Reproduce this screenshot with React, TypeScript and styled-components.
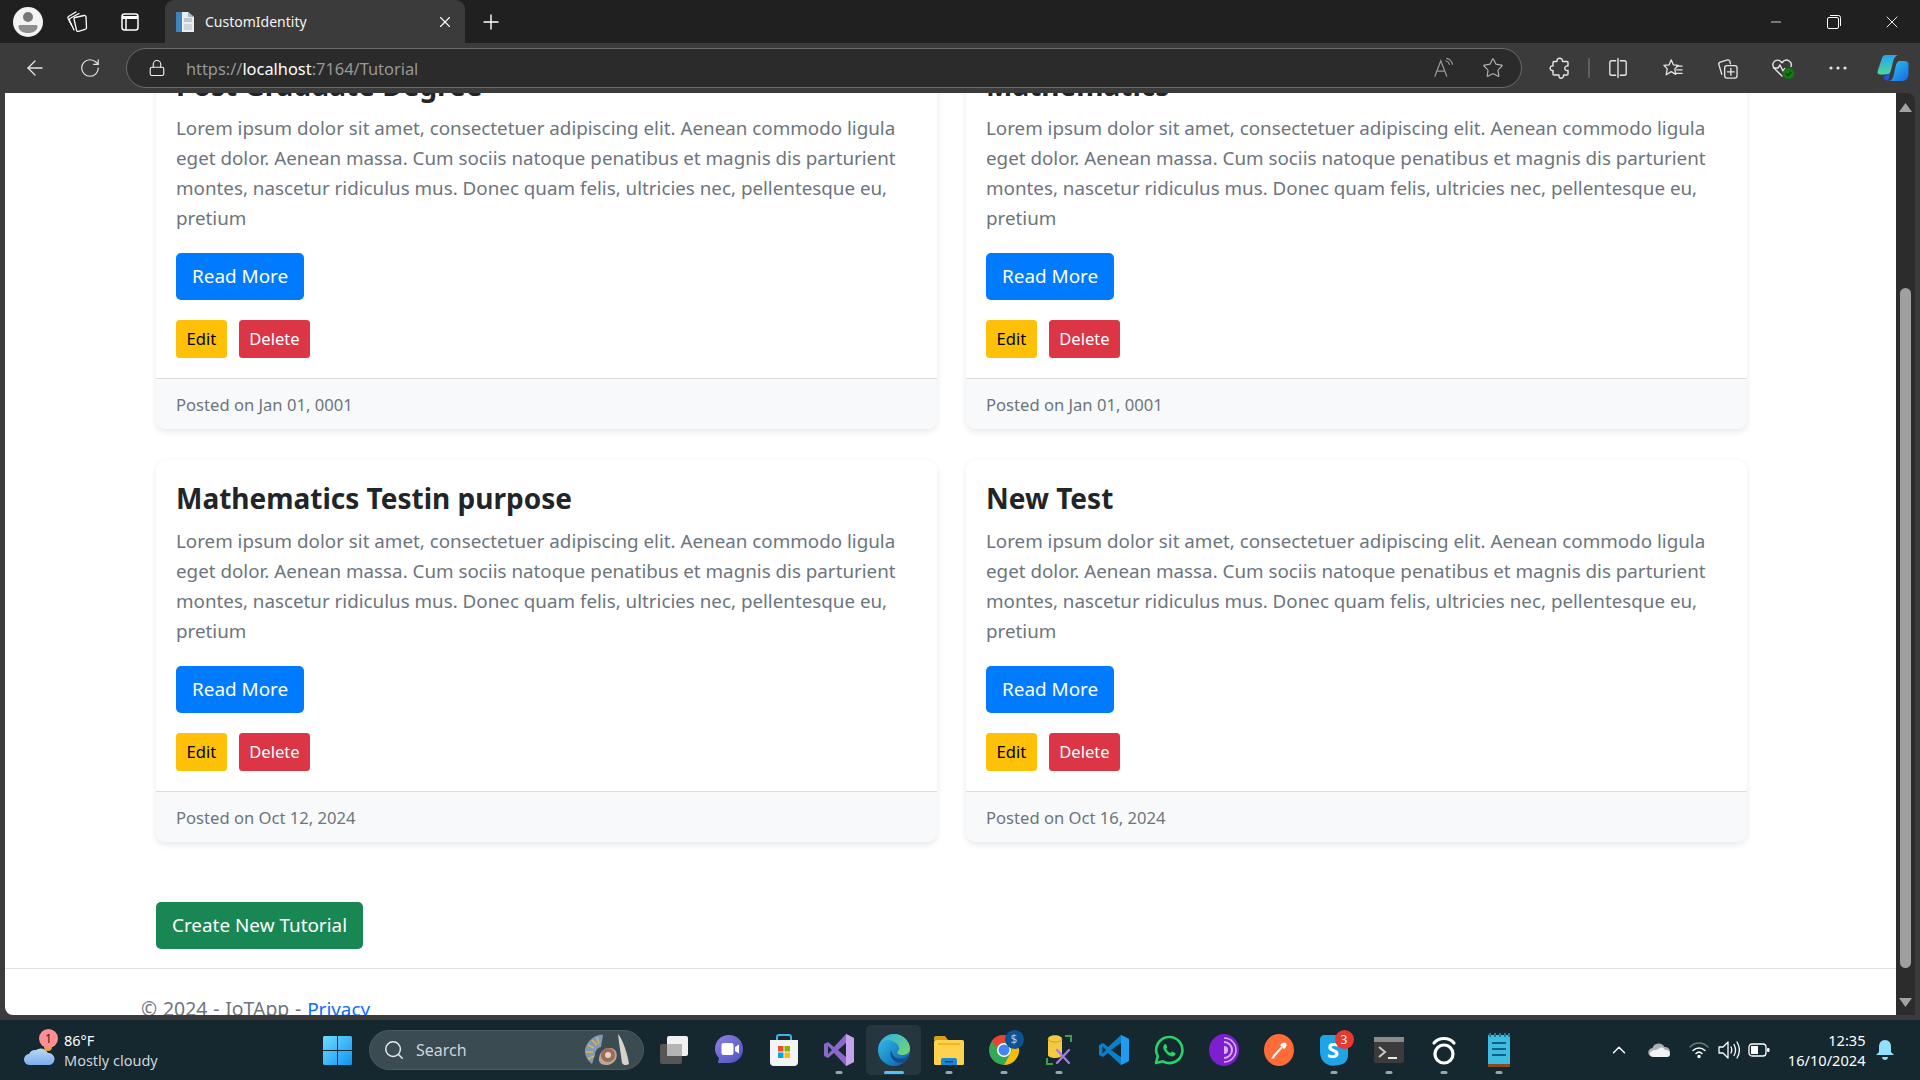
import React from 'react';
import styled, { createGlobalStyle } from 'styled-components';
import {
  ArrowLeft,
  ChevronUp,
  Lock,
  Minus,
  Plus,
  RotateCw,
  Search,
  Star,
  X,
} from 'lucide-react';

const GlobalStyle = createGlobalStyle`
  html, body { margin: 0; padding: 0; background: #202020; }
  * { box-sizing: border-box; }
  body { font-family: "Noto Sans", "Open Sans", Arial, sans-serif; }
`;

const Screen = styled.div`
  width: 1920px;
  height: 1080px;
  display: flex;
  flex-direction: column;
  overflow: hidden;
  background: #3b3b3b;
`;

/* browser chrome */
const TabStrip = styled.div`
  height: 43px;
  flex: none;
  display: flex;
  align-items: center;
  background: #202020;
  color: #fff;
  padding-left: 13px;
`;

const Avatar = styled.div`
  width: 30px;
  height: 30px;
  border-radius: 50%;
  background: #f3f3f3;
  margin-right: 18px;
  display: flex;
  align-items: center;
  justify-content: center;
`;

const StripIcon = styled.div`
  width: 32px;
  height: 32px;
  display: flex;
  align-items: center;
  justify-content: center;
  margin-right: 20.5px;
`;

const Tab = styled.div`
  width: 300px;
  height: 43px;
  margin-left: -1px;
  background: #3b3b3b;
  border-radius: 9px 9px 0 0;
  display: flex;
  align-items: center;
  padding: 0 11px 0 10px;
`;

const TabTitle = styled.span`
  flex: 1;
  margin-left: 10px;
  font-size: 14px;
  color: #f2f2f2;
`;

const NewTab = styled.div`
  margin-left: 14px;
  display: flex;
  align-items: center;
`;

const WindowButtons = styled.div`
  margin-left: auto;
  display: flex;
  align-items: center;
  padding-right: 18px;
  gap: 38px;
`;

const WindowButton = styled.div`
  width: 20px;
  display: flex;
  justify-content: center;
`;

const Toolbar = styled.div`
  height: 50px;
  flex: none;
  display: flex;
  align-items: center;
  background: #3b3b3b;
  color: #e6e6e6;
  padding-left: 17px;
`;

const NavButton = styled.div`
  width: 36px;
  height: 36px;
  margin-right: 19px;
  display: flex;
  align-items: center;
  justify-content: center;
`;

const AddressBar = styled.div`
  width: 1398px;
  height: 40px;
  margin-left: -1px;
  border: 1px solid #6a6a6a;
  border-radius: 20px;
  background: #2b2b2b;
  display: flex;
  align-items: center;
  padding: 0 4px 0 21px;
  margin-right: 15px;
`;

const Url = styled.div`
  flex: 1;
  margin-left: 20px;
  font-size: 16.4px;
  color: #989898;
`;

const UrlHost = styled.span`
  color: #fff;
`;

const BarIcon = styled.div`
  width: 49px;
  display: flex;
  justify-content: center;
  align-items: center;
`;

const ToolIcon = styled.div<{ $w?: number }>`
  width: ${({ $w }) => $w ?? 55}px;
  height: 34px;
  flex: none;
  display: flex;
  align-items: center;
  justify-content: center;
`;

const ToolDivider = styled.div`
  width: 2px;
  height: 20px;
  background: #5f5f5f;
  margin-left: 6px;
`;

/* page */
const Viewport = styled.div`
  flex: 1;
  min-height: 0;
  display: flex;
  padding-left: 5px;
  background: #3b3b3b;
`;

const Page = styled.div`
  width: 1891px;
  height: 922px;
  background: #fff;
  border-bottom-left-radius: 8px;
  overflow: hidden;
`;

const Cards = styled.div`
  display: grid;
  grid-template-columns: 781px 781px;
  column-gap: 29px;
  row-gap: 31px;
  margin: -46px 0 0 151px;
`;

const Card = styled.article`
  background: #fff;
  border-radius: 10px;
  box-shadow: 0 2.5px 6px rgba(0, 0, 0, 0.09);
  overflow: hidden;
  display: flex;
  flex-direction: column;
`;

const CardBody = styled.div`
  padding: 20px;
`;

const CardTitle = styled.h4`
  margin: 0 0 10px;
  font-size: 28px;
  line-height: 36px;
  font-weight: 700;
  color: #212529;
`;

const CardText = styled.p`
  margin: 0 0 20px;
  font-size: 18.8px;
  line-height: 30px;
  color: #6c757d;
`;

const Btn = styled.button<{ $bg: string; $fg?: string; $small?: boolean }>`
  display: block;
  height: ${({ $small }) => ($small ? 38 : 47)}px;
  padding: 0 ${({ $small }) => ($small ? 10.5 : 16)}px;
  border: none;
  border-radius: ${({ $small }) => ($small ? 3.5 : 5)}px;
  background: ${({ $bg }) => $bg};
  color: ${({ $fg }) => $fg ?? '#fff'};
  font-family: inherit;
  font-size: ${({ $small }) => ($small ? 16.6 : 18.9)}px;
  line-height: 1;
`;

const ReadMore = styled(Btn)`
  margin-bottom: 20px;
`;

const CardActions = styled.div`
  display: flex;
  gap: 12px;
`;

const CardFooter = styled.div`
  height: 51px;
  padding: 0 20px;
  display: flex;
  align-items: center;
  border-top: 1px solid #dcdcdc;
  background: #f8f9fa;
  color: #6c757d;
  font-size: 16.6px;
`;

const CreateRow = styled.div`
  margin: 60px 0 19px 151px;
`;

const PageFooter = styled.footer`
  border-top: 1px solid #dee2e6;
  padding: 25px 0 0 136px;
  font-size: 19.4px;
  line-height: 30px;
  word-spacing: 0.8px;
  color: #6c757d;
`;

const FooterLink = styled.a`
  color: #0d6efd;
  font-size: 18.9px;
  text-decoration: underline;
`;

const ScrollTrack = styled.div`
  width: 19px;
  height: 922px;
  background: #2c2c2c;
  border-radius: 0 8px 0 0;
  display: flex;
  flex-direction: column;
  align-items: center;
  padding-top: 10px;
`;

const ScrollThumb = styled.div`
  width: 11px;
  height: 680px;
  margin-top: 176px;
  background: #9f9f9f;
  border-radius: 6px;
`;

const ScrollArrow = styled.svg<{ $down?: boolean }>`
  flex: none;
  margin-top: ${({ $down }) => ($down ? 30 : 0)}px;
  transform: ${({ $down }) => ($down ? 'rotate(180deg)' : 'none')};
`;

const FrameEdge = styled.div`
  height: 5px;
  flex: none;
  background: #3b3b3b;
`;

/* taskbar */
const Taskbar = styled.div`
  height: 60px;
  flex: none;
  display: flex;
  align-items: center;
  background: #15272f;
  color: #fff;
`;

const Weather = styled.div`
  width: 310px;
  padding-left: 24px;
  display: flex;
  align-items: center;
  gap: 8px;
`;

const WeatherIcon = styled.div`
  position: relative;
  width: 32px;
  height: 34px;
  padding-top: 9px;
`;

const WeatherBadge = styled.span`
  position: absolute;
  left: 15px;
  top: -4px;
  width: 19px;
  height: 19px;
  border-radius: 50%;
  background: #ff8f93;
  color: #222;
  font-size: 12px;
  line-height: 19px;
  text-align: center;
`;

const WeatherText = styled.div`
  font-size: 14.5px;
  line-height: 20px;
  margin-top: -1px;
`;

const WeatherSub = styled.div`
  color: #d0d5d8;
`;

const StartCell = styled.div`
  width: 55px;
  display: flex;
  justify-content: center;
`;

const SearchPill = styled.div`
  width: 275px;
  height: 40px;
  margin: 0 2px 0 4px;
  border-radius: 20px;
  background: #3a4b52;
  border: 1px solid #4a5a60;
  display: flex;
  align-items: center;
  padding: 0 10px 0 13px;
`;

const SearchLabel = styled.span`
  flex: 1;
  margin-left: 11px;
  color: #cfd5d8;
  font-size: 16px;
`;

const TaskCell = styled.div<{ $active?: boolean }>`
  position: relative;
  width: 55px;
  height: 50px;
  flex: none;
  display: flex;
  align-items: center;
  justify-content: center;
  border-radius: 5px;
  background: ${({ $active }) => ($active ? '#26363f' : 'transparent')};
`;

const RunDot = styled.span<{ $active?: boolean }>`
  position: absolute;
  bottom: 1px;
  left: 50%;
  transform: translateX(-50%);
  width: ${({ $active }) => ($active ? 20 : 7)}px;
  height: 3.5px;
  border-radius: 2px;
  background: ${({ $active }) => ($active ? '#4cc2ff' : '#9aa5aa')};
`;

const CountBadge = styled.span<{ $bg: string; $fg?: string }>`
  position: absolute;
  right: 7.5px;
  top: 4.5px;
  width: 19px;
  height: 19px;
  border-radius: 50%;
  background: ${({ $bg }) => $bg};
  color: ${({ $fg }) => $fg ?? '#fff'};
  font-size: 12px;
  line-height: 19px;
  text-align: center;
`;

const Tray = styled.div`
  margin-left: auto;
  display: flex;
  align-items: center;
  padding-right: 23px;
`;

const TrayIcon = styled.div<{ $w: number }>`
  width: ${({ $w }) => $w}px;
  display: flex;
  justify-content: center;
`;

const Clock = styled.div`
  width: 92px;
  margin-right: 7.5px;
  text-align: right;
  font-size: 14.6px;
  line-height: 20px;
`;

const CollectionsIcon = () => (
  <svg width="22" height="24" viewBox="0 0 22 24" fill="none" stroke="currentColor" strokeWidth="1.300" strokeLinecap="round" strokeLinejoin="round">
    <path d="M9 7.500 18 5.500c1-.2 1.800.4 2 1.400l.5 10.500c0 1-.5 1.800-1.500 2l-6.500 2c-1 .2-1.800-.3-2-1.300L8 9c-.2-.8.200-1.300 1-1.500z" />
    <path d="M8 20 3.500 10.500c-.4-1 0-1.800.8-2.300L13 3.500" />
    <path d="M5.500 15 2 8.500C1.600 7.500 2 6.700 2.800 6.200L10 2" />
  </svg>
);

const VerticalTabsIcon = () => (
  <svg width="20" height="20" viewBox="0 0 20 20" fill="none" stroke="currentColor" strokeWidth="1.500">
    <rect x="2" y="2" width="16" height="16" rx="2.500" />
    <path d="M2 5.500h16" strokeWidth="3" />
    <path d="M6 5v13" />
  </svg>
);

const FaviconIcon = () => (
  <svg width="20" height="22" viewBox="0 0 20 22">
    <path d="M1 1h12l6 5v15H1z" fill="#e9eef2" />
    <rect x="1" y="1" width="6" height="20" fill="#3f83bd" />
    <rect x="9" y="7" width="8" height="4" fill="#bfc8cf" />
    <rect x="9" y="13" width="8" height="6" fill="#cdd5db" />
    <path d="M13 1l6 5h-6z" fill="#aab4bc" />
  </svg>
);

const ReadAloudIcon = () => (
  <svg width="22" height="20" viewBox="0 0 24 22" fill="none" stroke="#9a9a9a" strokeWidth="1.300" strokeLinecap="round">
    <path d="M2 20 8.500 3 15 20M4.500 14.500h8" />
    <path d="M14 3c2 .5 3.500 2 4 4M15 .5c3 .7 5.500 3 6.500 6.500" />
  </svg>
);

const PuzzleIcon = () => (
  <svg width="22" height="24" viewBox="0 0 22 24" fill="none" stroke="currentColor" strokeWidth="1.400" strokeLinejoin="round">
    <path d="M8 5.500C7 1.500 14 1 13.500 5.500H18c.6 0 1 .4 1 1v3.500c-4-1-4.500 5.500 0 4.500V18c0 .6-.4 1-1 1h-3.500c1 4-5.500 4.500-4.500 0H5c-.6 0-1-.4-1-1v-3.500c-4 1-3.500-5.500 0-4.500V6.500c0-.6.4-1 1-1z" />
  </svg>
);

const SplitIcon = () => (
  <svg width="20" height="24" viewBox="0 0 22 24" fill="none" stroke="currentColor" strokeWidth="1.500">
    <path d="M9 4H4a2 2 0 0 0-2 2v12a2 2 0 0 0 2 2h5M13 4h5a2 2 0 0 1 2 2v12a2 2 0 0 1-2 2h-5M11 1v22" />
  </svg>
);

const FavoritesIcon = () => (
  <svg width="22" height="20" viewBox="0 0 24 22" fill="none" stroke="currentColor" strokeWidth="1.400" strokeLinejoin="round" strokeLinecap="round">
    <path d="M10 2l2.400 5.500 5.600.5-4 4 1 6-5-3-5.500 3.500 1.200-6.500L2 8l5.800-.5z" />
    <path d="M16 9h6M16 13h6M15 17h7" />
  </svg>
);

const AddCollectionIcon = () => (
  <svg width="21" height="21" viewBox="0 0 22 22" fill="none" stroke="currentColor" strokeWidth="1.400" strokeLinecap="round">
    <path d="M5 17 2 7c-.4-1.300.2-2.200 1.400-2.600L11 2c1.300-.3 2 .2 2.500 1.500L14 6" />
    <rect x="8" y="8" width="13" height="13" rx="2.500" />
    <path d="M14.500 11v7M11 14.500h7" />
  </svg>
);

const HealthIcon = () => (
  <svg width="24" height="24" viewBox="0 0 24 24">
    <path
      d="M11 20 3.500 12.500C1 10 1.500 6.500 3.800 5c2.400-1.500 5.200-.8 7.200 1.800C13 4.200 15.800 3.500 18.200 5c1.800 1.200 2.600 3.400 1.800 5.500M2.500 12H7l2-3 3 6 1.500-2.500"
      fill="none"
      stroke="#e6e6e6"
      strokeWidth="1.400"
      strokeLinecap="round"
      strokeLinejoin="round"
    />
    <circle cx="17.500" cy="17.500" r="5.500" fill="#107c10" />
    <path d="M15 17.500l2 2 3.200-3.500" fill="none" stroke="#0b3d0b" strokeWidth="1.500" />
  </svg>
);

const CopilotIcon = () => (
  <svg width="32" height="28" viewBox="0 0 32 28">
    <defs>
      <linearGradient id="copilotA" x1="0" y1="0" x2="0" y2="1">
        <stop offset="0" stopColor="#27a4f0" />
        <stop offset="1" stopColor="#4bd89a" />
      </linearGradient>
      <linearGradient id="copilotB" x1="0" y1="0" x2="1" y2="1">
        <stop offset="0" stopColor="#30c9f5" />
        <stop offset="1" stopColor="#1668e0" />
      </linearGradient>
    </defs>
    <path d="M9 1h12c-3 1-4 3-5 7l-2 8c-.7 3-2 4.500-5 4.500H3c-2 0-3-1.500-2.300-3.500L5 4c.7-2 2-3 4-3z" fill="url(#copilotA)" />
    <path d="M23 7h5c2 0 3.500 1.500 3.500 3.500V20c0 4-2.500 7-6.500 7H11c3 0 4.500-1.500 5.500-5l2-9c.7-3.500 2-6 4.500-6z" fill="url(#copilotB)" />
    <path d="M8 20h5l-1 4c-.5 2-2 3-3 3h2l-4-2z" fill="#2a4fd8" />
  </svg>
);

const CloudIcon = () => (
  <svg width="32" height="24" viewBox="0 0 32 24">
    <defs>
      <linearGradient id="weatherCloud" x1="0" y1="0" x2="0" y2="1">
        <stop offset="0" stopColor="#bcd8f8" />
        <stop offset="1" stopColor="#7aaeea" />
      </linearGradient>
    </defs>
    <circle cx="24" cy="5" r="4" fill="#f09a36" />
    <path d="M6 23a5.500 5.500 0 0 1-1-11 7 7 0 0 1 7-4 8 8 0 0 1 12 3 6 6 0 0 1 1 12z" fill="url(#weatherCloud)" />
  </svg>
);

const WindowsLogo = () => (
  <svg width="29" height="29" viewBox="0 0 29 29">
    <defs>
      <linearGradient id="winLogo" x1="0" y1="0" x2="1" y2="1">
        <stop offset="0" stopColor="#6fdcff" />
        <stop offset="1" stopColor="#0e94f0" />
      </linearGradient>
    </defs>
    <path d="M0 1.500A1.500 1.500 0 0 1 1.500 0H14v14H0zM15 0h12.500A1.500 1.500 0 0 1 29 1.500V14H15zM0 15h14v14H1.500A1.500 1.500 0 0 1 0 27.500zM15 15h14v12.500a1.500 1.500 0 0 1-1.500 1.500H15z" fill="url(#winLogo)" />
  </svg>
);

const ShellsArt = () => (
  <svg width="50" height="34" viewBox="0 0 50 34">
    <path d="M2 16C5 6 14 1 20 2l-2 12c-4 1-6 4-6 8l-3 9c-4-3-8-9-7-15z" fill="#7f9bb4" />
    <path d="M5 12l6 3M9 7l5 5M14 4l2 7M3 19l7 0M5 26l6-3" stroke="#e0b44c" strokeWidth="1.500" />
    <path d="M16 28c-1-8 5-14 12-13 5 1 7 6 5 11-2 4-6 6-10 6-3 0-6-1-7-4z" fill="#b6a79a" />
    <circle cx="25" cy="22" r="7" fill="#9c6d55" />
    <circle cx="25" cy="22" r="3" fill="#e4d5c6" />
    <path d="M35 1c4 4 10 20 11 30-3 2-6 1-7-1-1-8-3-20-4-29z" fill="#d6d3cb" />
  </svg>
);

const TaskViewIcon = () => (
  <svg width="30" height="30" viewBox="0 0 30 30">
    <rect x="1" y="9" width="22" height="20" rx="2" fill="#565656" />
    <rect x="8" y="1" width="21" height="20" rx="2" fill="#f1f1f1" />
    <rect x="8" y="9" width="15" height="12" fill="#b5b5b5" />
  </svg>
);

const MeetIcon = () => (
  <svg width="28" height="30" viewBox="0 0 28 30">
    <defs>
      <linearGradient id="meet" x1="0" y1="0" x2="1" y2="1">
        <stop offset="0" stopColor="#8f7fe8" />
        <stop offset="1" stopColor="#4b53bc" />
      </linearGradient>
    </defs>
    <path d="M14 0c8 0 14 6 14 14s-6 14-14 14H3l1-5C1.500 20.500 0 17.500 0 14 0 6 6 0 14 0z" fill="url(#meet)" />
    <rect x="6.500" y="8" width="12" height="12" rx="2" fill="#fff" />
    <path d="M20 12l4-2.500v9L20 16z" fill="#fff" />
  </svg>
);

const StoreIcon = () => (
  <svg width="30" height="32" viewBox="0 0 30 32">
    <path d="M8 6V3a2 2 0 0 1 2-2h10a2 2 0 0 1 2 2v3" fill="none" stroke="#37b7e8" strokeWidth="2" />
    <path d="M1 6h28v22a4 4 0 0 1-4 4H5a4 4 0 0 1-4-4z" fill="#f4f4f4" />
    <rect x="9" y="12" width="5.500" height="5.500" fill="#f25022" />
    <rect x="15.500" y="12" width="5.500" height="5.500" fill="#7fba00" />
    <rect x="9" y="18.500" width="5.500" height="5.500" fill="#00a4ef" />
    <rect x="15.500" y="18.500" width="5.500" height="5.500" fill="#ffb900" />
  </svg>
);

const VisualStudioIcon = () => (
  <svg width="30" height="32" viewBox="0 0 30 32">
    <path d="M22 0l8 4v24l-8 4-12-13-6 5-4-2V10l4-2 6 5z" fill="#8a68c9" />
    <path d="M22 0l8 4v24l-8 4z" fill="#c6a2ea" />
    <path d="M22 9 14 16l8 7z" fill="#15272f" />
    <path d="M4 12v8l4-4z" fill="#15272f" />
  </svg>
);

const EdgeIcon = () => (
  <svg width="32" height="32" viewBox="0 0 32 32">
    <defs>
      <linearGradient id="edgeA" x1="0" y1="0" x2="1" y2="1">
        <stop offset="0" stopColor="#35c1f1" />
        <stop offset="1" stopColor="#0c59a4" />
      </linearGradient>
      <linearGradient id="edgeB" x1="0" y1="0" x2="1" y2="1">
        <stop offset="0" stopColor="#2fb0e8" />
        <stop offset="1" stopColor="#7cd66a" />
      </linearGradient>
    </defs>
    <circle cx="16" cy="16" r="16" fill="url(#edgeA)" />
    <path d="M3 9C6 3 11 0 16 0c9 0 16 7 16 15 0 4-4 6-8 6-3 0-5-1-5-3 3-1 3-6-1-9C13 5 7 5 3 9z" fill="url(#edgeB)" />
    <path d="M13 16c-2 6 2 12 8 13 5 .500 8-3 9-7-3 3-8 3-11 2-4-1-5-5-6-8z" fill="#0f4f94" />
  </svg>
);

const ExplorerIcon = () => (
  <svg width="32" height="30" viewBox="0 0 32 30">
    <path d="M1 3a2 2 0 0 1 2-2h9l3 4h-14z" fill="#d79f16" />
    <rect x="1" y="5" width="30" height="25" rx="1.500" fill="#fcd24f" />
    <rect x="5" y="8" width="22" height="2" fill="#f5b81a" />
    <path d="M10 23h12a2 2 0 0 1 2 2v5H8v-5a2 2 0 0 1 2-2z" fill="#1c88d4" />
    <rect x="12" y="26" width="8" height="1.500" fill="#0d4f82" />
  </svg>
);

const ChromeIcon = () => (
  <svg width="32" height="32" viewBox="0 0 32 32">
    <circle cx="16" cy="16" r="15" fill="#34a853" />
    <path d="M16 1a15 15 0 0 1 13 7.500H16a7.500 7.500 0 0 0-7 5L3.500 7A15 15 0 0 1 16 1z" fill="#ea4335" />
    <path d="M29 8.500A15 15 0 0 1 16 31l6.500-11.500A7.500 7.500 0 0 0 22 11z" fill="#fbbc04" />
    <circle cx="16" cy="16" r="7" fill="#fff" />
    <circle cx="16" cy="16" r="5.500" fill="#4285f4" />
  </svg>
);

const SqlToolsIcon = () => (
  <svg width="28" height="32" viewBox="0 0 28 32" fill="none">
    <path d="M3 5c0-5 14-5 14 0v16c0 4-14 4-14 0z" fill="#f6c945" />
    <path d="M3 5c0 4 14 4 14 0" stroke="#d49a1d" strokeWidth="1" />
    <path d="M20 2h6v6M2 24v6h6" stroke="#3f9f49" strokeWidth="2" />
    <path d="M12 29l12-13M12 16l12 13" stroke="#a77be0" strokeWidth="2.300" strokeLinecap="round" />
  </svg>
);

const VsCodeIcon = () => (
  <svg width="30" height="30" viewBox="0 0 30 30">
    <path d="M22 0l8 4v22l-8 4-13-12-5 4-4-2V10l4-2 5 4z" fill="#0a7fcb" />
    <path d="M22 0l8 4v22l-8 4z" fill="#1f9cf0" />
    <path d="M22 8 12 15l10 7z" fill="#15272f" />
    <path d="M3.500 11.500v7L7 15z" fill="#15272f" />
  </svg>
);

const WhatsAppIcon = () => (
  <svg width="30" height="30" viewBox="0 0 30 30">
    <path d="M15.500 2a13 13 0 1 1-6.500 24.300L2 28l1.800-6.800A13 13 0 0 1 15.500 2z" fill="none" stroke="#25d366" strokeWidth="2.600" strokeLinejoin="round" />
    <path d="M11 9c-1 .5-2 2-1.700 4 .5 3 4 7 8 8.300 2 .5 3.500-.5 4.200-2 .2-.7 0-1.200-.5-1.400l-2.500-1.200c-.5-.2-.9 0-1.200.4l-.8 1c-1.800-.7-3.500-2.300-4.400-4.300l.8-.9c.3-.4.400-.8.200-1.200L12.200 9.500C12 9 11.500 8.800 11 9z" fill="#25d366" />
  </svg>
);

const TorIcon = () => (
  <svg width="30" height="32" viewBox="0 0 30 32" fill="none">
    <ellipse cx="15" cy="16" rx="15" ry="16" fill="#7d1fd0" />
    <path d="M15 8a8 8 0 0 1 0 16" stroke="#d6b4f2" strokeWidth="2" />
    <path d="M15 4a12 12 0 0 1 0 24" stroke="#d6b4f2" strokeWidth="1.500" />
    <path d="M15 12a4 4 0 0 1 0 8z" fill="#d6b4f2" />
  </svg>
);

const PostmanIcon = () => (
  <svg width="30" height="32" viewBox="0 0 30 32" fill="none">
    <ellipse cx="15" cy="16" rx="15" ry="16" fill="#ff6c37" />
    <path d="M9 23l9-10" stroke="#fff" strokeWidth="2" />
    <path d="M16 11c2-3 5-3 6-2s1 4-2 6z" fill="#fff" />
    <path d="M7 25l2-3 2 2z" fill="#fff" />
  </svg>
);

const SkypeIcon = () => (
  <svg width="30" height="34" viewBox="0 0 30 34">
    <path d="M5 2h14c6 0 10 4 10 10v10c0 6-4 10-10 10-6 2-12 0-15-4-2-2-3-6-3-10V6c0-2 2-4 4-4z" fill="#1fa4e8" />
    <text x="8" y="25" fontSize="22" fontWeight="700" fill="#fff" fontFamily="Noto Sans, sans-serif">S</text>
  </svg>
);

const TerminalIcon = () => (
  <svg width="32" height="30" viewBox="0 0 32 30" fill="none">
    <rect x="1" y="2" width="30" height="26" rx="2" fill="#3b3b3b" />
    <rect x="1" y="2" width="30" height="5" fill="#8a8a8a" />
    <path d="M6 12l6 5-6 5" stroke="#c9c9c9" strokeWidth="2" />
    <path d="M15 23h9" stroke="#e8e8e8" strokeWidth="2" />
  </svg>
);

const RingIcon = () => (
  <svg width="26" height="32" viewBox="0 0 26 32" fill="none" stroke="#fff" strokeWidth="3.200">
    <circle cx="13" cy="20" r="9" />
    <path d="M3 9c5-6 15-6 20 0" strokeLinecap="round" />
  </svg>
);

const NotepadIcon = () => (
  <svg width="24" height="34" viewBox="0 0 24 34">
    <rect x="1" y="2" width="22" height="29" fill="#3fbde0" />
    <rect x="1" y="31" width="22" height="3" fill="#8a4b1e" />
    <path d="M5 10h14M5 16h14M5 22h14" stroke="#0e5f84" strokeWidth="2" />
    <path d="M3 0v4M8 0v4M13 0v4M18 0v4M22 0v4" stroke="#1a7da6" strokeWidth="2" />
  </svg>
);

const OneDriveIcon = () => (
  <svg width="22" height="16" viewBox="0 0 22 16">
    <path d="M5 15a4.500 4.500 0 0 1-.5-9 6.500 6.500 0 0 1 12-1 5 5 0 0 1 1 10z" fill="#aab2b6" />
    <path d="M8 8l4-2c2-1 4 0 5 2h1c2 0 4 2 4 4s-1 3-3 3H6c-2 0-4-1-4-3s2-4 6-4z" fill="#f1f3f4" />
  </svg>
);

const WifiIcon = () => (
  <svg width="20" height="18" viewBox="0 0 20 18" fill="none" stroke="#fff" strokeWidth="1.500" strokeLinecap="round">
    <path d="M1 6c5-5.500 13-5.500 18 0" stroke="#6d7a80" />
    <path d="M4 9.500c3.500-3.500 8.500-3.500 12 0M7 12.500c2-1.800 4-1.800 6 0" />
    <circle cx="10" cy="15.500" r="1" fill="#fff" />
  </svg>
);

const VolumeIcon = () => (
  <svg width="22" height="20" viewBox="0 0 22 20" fill="none" stroke="#fff" strokeWidth="1.300" strokeLinejoin="round" strokeLinecap="round">
    <path d="M1 7v6h4l5 5V2L5 7z" />
    <path d="M13 7c1 2 1 4 0 6M16 4.500c2 3.500 2 7.500 0 11M19 2c3 5 3 11 0 16" />
  </svg>
);

const BatteryIcon = () => (
  <svg width="22" height="14" viewBox="0 0 22 14" fill="none">
    <rect x="1" y="1" width="17" height="12" rx="3" stroke="#fff" strokeWidth="1.300" />
    <rect x="3" y="3" width="7" height="8" fill="#fff" />
    <rect x="19" y="5" width="2.500" height="4" rx="1" fill="#fff" />
  </svg>
);

const BellIcon = () => (
  <svg width="18" height="22" viewBox="0 0 18 22">
    <path d="M9 1c4 0 6 3 6 7v5l3 3H0l3-3V8c0-4 2-7 6-7z" fill="#8fdfff" />
    <path d="M6 18h6c0 2-1.500 3-3 3s-3-1-3-3z" fill="#8fdfff" />
  </svg>
);

const AvatarIcon = () => (
  <svg width="22" height="24" viewBox="0 0 22 24">
    <circle cx="11" cy="7" r="5" fill="#777" />
    <path d="M3 15h16c.8 0 1.500.7 1.500 1.500 0 4-4 6.500-9.500 6.500S1.500 20.500 1.500 16.500C1.500 15.700 2.200 15 3 15z" fill="#8f8f8f" />
  </svg>
);

const RestoreIcon = () => (
  <svg width="14" height="14" viewBox="0 0 14 14" fill="none" stroke="#fff" strokeWidth="1">
    <rect x=".5" y="2.500" width="11" height="11" rx="1.500" />
    <path d="M3 .5h8.500a2 2 0 0 1 2 2V11" />
  </svg>
);

const ArrowShape = ({ down }: { down?: boolean }) => (
  <ScrollArrow $down={down} width="13" height="9" viewBox="0 0 13 9">
    <path d="M6.500 0 13 9H0z" fill="#a3a3a3" />
  </ScrollArrow>
);

const LOREM =
  'Lorem ipsum dolor sit amet, consectetuer adipiscing elit. Aenean commodo ligula eget dolor. Aenean massa. Cum sociis natoque penatibus et magnis dis parturient montes, nascetur ridiculus mus. Donec quam felis, ultricies nec, pellentesque eu, pretium';

const tutorials = [
  { title: 'Post Graduate Degree', posted: 'Jan 01, 0001' },
  { title: 'Mathematics', posted: 'Jan 01, 0001' },
  { title: 'Mathematics Testin purpose', posted: 'Oct 12, 2024' },
  { title: 'New Test', posted: 'Oct 16, 2024' },
];

const taskApps: { icon: React.ReactNode; running?: boolean; active?: boolean; badge?: string; badgeBg?: string; badgeFg?: string }[] = [
  { icon: <TaskViewIcon /> },
  { icon: <MeetIcon /> },
  { icon: <StoreIcon /> },
  { icon: <VisualStudioIcon />, running: true },
  { icon: <EdgeIcon />, running: true, active: true },
  { icon: <ExplorerIcon />, running: true },
  { icon: <ChromeIcon />, running: true, badge: '$', badgeBg: '#0b5394', badgeFg: '#9fc3e0' },
  { icon: <SqlToolsIcon />, running: true },
  { icon: <VsCodeIcon /> },
  { icon: <WhatsAppIcon /> },
  { icon: <TorIcon /> },
  { icon: <PostmanIcon /> },
  { icon: <SkypeIcon />, running: true, badge: '3', badgeBg: '#e8382f' },
  { icon: <TerminalIcon />, running: true },
  { icon: <RingIcon />, running: true },
  { icon: <NotepadIcon />, running: true },
];

const App: React.FC = () => (
  <>
    <GlobalStyle />
    <Screen>
      <TabStrip>
        <Avatar>
          <AvatarIcon />
        </Avatar>
        <StripIcon>
          <CollectionsIcon />
        </StripIcon>
        <StripIcon>
          <VerticalTabsIcon />
        </StripIcon>
        <Tab>
          <FaviconIcon />
          <TabTitle>CustomIdentity</TabTitle>
          <X size={18} strokeWidth={1.5} />
        </Tab>
        <NewTab>
          <Plus size={24} strokeWidth={1.4} />
        </NewTab>
        <WindowButtons>
          <WindowButton>
            <Minus size={16} strokeWidth={1.2} />
          </WindowButton>
          <WindowButton>
            <RestoreIcon />
          </WindowButton>
          <WindowButton>
            <X size={20} strokeWidth={1.1} />
          </WindowButton>
        </WindowButtons>
      </TabStrip>

      <Toolbar>
        <NavButton>
          <ArrowLeft size={24} strokeWidth={1.3} />
        </NavButton>
        <NavButton>
          <RotateCw size={22} strokeWidth={1.3} />
        </NavButton>
        <AddressBar>
          <Lock size={18} strokeWidth={1.5} color="#f0f0f0" />
          <Url>
            https://<UrlHost>localhost</UrlHost>:7164/Tutorial
          </Url>
          <BarIcon>
            <ReadAloudIcon />
          </BarIcon>
          <BarIcon>
            <Star size={22} strokeWidth={1.3} color="#b0b0b0" />
          </BarIcon>
        </AddressBar>
        <ToolIcon $w={45}>
          <PuzzleIcon />
        </ToolIcon>
        <ToolDivider />
        <ToolIcon>
          <SplitIcon />
        </ToolIcon>
        <ToolIcon>
          <FavoritesIcon />
        </ToolIcon>
        <ToolIcon>
          <AddCollectionIcon />
        </ToolIcon>
        <ToolIcon>
          <HealthIcon />
        </ToolIcon>
        <ToolIcon>
          <svg width="18" height="4" viewBox="0 0 18 4" fill="#e6e6e6">
            <circle cx="2" cy="2" r="1.600" />
            <circle cx="9" cy="2" r="1.600" />
            <circle cx="16" cy="2" r="1.600" />
          </svg>
        </ToolIcon>
        <ToolIcon>
          <CopilotIcon />
        </ToolIcon>
      </Toolbar>

      <Viewport>
        <Page>
          <Cards>
            {tutorials.map((t) => (
              <Card key={t.title}>
                <CardBody>
                  <CardTitle>{t.title}</CardTitle>
                  <CardText>{LOREM}</CardText>
                  <ReadMore $bg="#007bff">Read More</ReadMore>
                  <CardActions>
                    <Btn $small $bg="#ffc107" $fg="#000">
                      Edit
                    </Btn>
                    <Btn $small $bg="#dc3545">
                      Delete
                    </Btn>
                  </CardActions>
                </CardBody>
                <CardFooter>Posted on {t.posted}</CardFooter>
              </Card>
            ))}
          </Cards>
          <CreateRow>
            <Btn $bg="#198754">Create New Tutorial</Btn>
          </CreateRow>
          <PageFooter>
            © 2024 - IoTApp - <FooterLink href="#privacy">Privacy</FooterLink>
          </PageFooter>
        </Page>
        <ScrollTrack>
          <ArrowShape />
          <ScrollThumb />
          <ArrowShape down />
        </ScrollTrack>
      </Viewport>
      <FrameEdge />

      <Taskbar>
        <Weather>
          <WeatherIcon>
            <CloudIcon />
            <WeatherBadge>1</WeatherBadge>
          </WeatherIcon>
          <WeatherText>
            86°F
            <WeatherSub>Mostly cloudy</WeatherSub>
          </WeatherText>
        </Weather>
        <StartCell>
          <WindowsLogo />
        </StartCell>
        <SearchPill>
          <Search size={22} strokeWidth={1.6} color="#e8ecee" />
          <SearchLabel>Search</SearchLabel>
          <ShellsArt />
        </SearchPill>
        {taskApps.map((app, i) => (
          <TaskCell key={i} $active={app.active}>
            {app.icon}
            {app.badge && (
              <CountBadge $bg={app.badgeBg ?? '#e8382f'} $fg={app.badgeFg}>
                {app.badge}
              </CountBadge>
            )}
            {app.running && <RunDot $active={app.active} />}
          </TaskCell>
        ))}
        <Tray>
          <TrayIcon $w={30}>
            <ChevronUp size={22} strokeWidth={1.6} />
          </TrayIcon>
          <TrayIcon $w={50}>
            <OneDriveIcon />
          </TrayIcon>
          <TrayIcon $w={30}>
            <WifiIcon />
          </TrayIcon>
          <TrayIcon $w={30}>
            <VolumeIcon />
          </TrayIcon>
          <TrayIcon $w={30}>
            <BatteryIcon />
          </TrayIcon>
          <Clock>
            12:35
            <br />
            16/10/2024
          </Clock>
          <TrayIcon $w={24}>
            <BellIcon />
          </TrayIcon>
        </Tray>
      </Taskbar>
    </Screen>
  </>
);

export default App;
